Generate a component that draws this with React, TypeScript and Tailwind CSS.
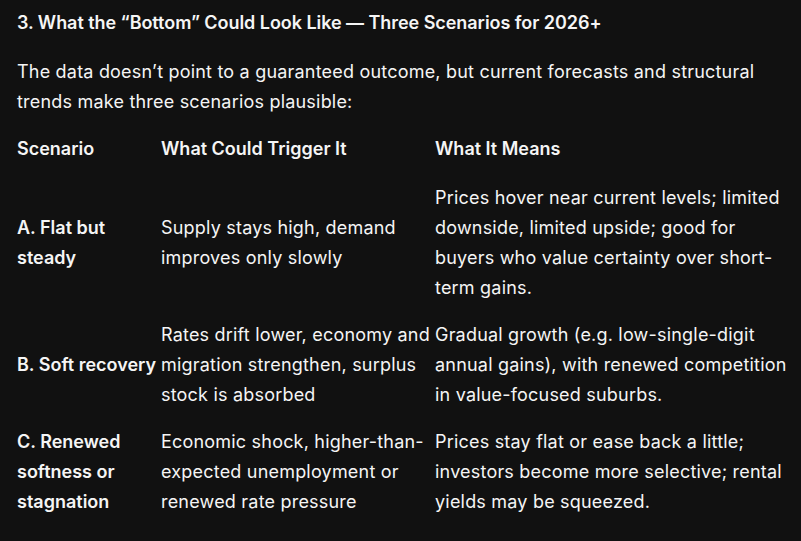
import React from "react";

type Row = { label: string[]; trigger: string[]; means: string[] };

const rows: Row[] = [
  {
    label: ["A. Flat but", "steady"],
    trigger: ["Supply stays high, demand", "improves only slowly"],
    means: [
      "Prices hover near current levels; limited",
      "downside, limited upside; good for",
      "buyers who value certainty over short-",
      "term gains.",
    ],
  },
  {
    label: ["B. Soft recovery"],
    trigger: ["Rates drift lower, economy and", "migration strengthen, surplus", "stock is absorbed"],
    means: [
      "Gradual growth (e.g. low-single-digit",
      "annual gains), with renewed competition",
      "in value-focused suburbs.",
    ],
  },
  {
    label: ["C. Renewed", "softness or", "stagnation"],
    trigger: ["Economic shock, higher-than-", "expected unemployment or", "renewed rate pressure"],
    means: [
      "Prices stay flat or ease back a little;",
      "investors become more selective; rental",
      "yields may be squeezed.",
    ],
  },
];

function Lines({ lines }: { lines: string[] }) {
  return (
    <>
      {lines.map((l, i) => (
        <span key={i} className="block whitespace-nowrap">
          {l}
        </span>
      ))}
    </>
  );
}

export default function App() {
  return (
    <div className="min-h-[541px] w-full bg-[#111111] px-[17px] pt-[9px] text-[#f5f5f5] font-['Inter',sans-serif] text-[18px]">
      <h3 className="font-semibold leading-[27px] tracking-[-0.05px] whitespace-nowrap">
        3. What the “Bottom” Could Look Like — Three Scenarios for 2026+
      </h3>
      <p className="mt-[21px] leading-[30px] tracking-[0.2px]">
        The data doesn’t point to a guaranteed outcome, but current forecasts and structural
        <br />
        trends make three scenarios plausible:
      </p>
      <table className="mt-[9px] w-[778px] table-fixed border-collapse text-left leading-[30px]">
        <colgroup>
          <col className="w-[144px]" />
          <col className="w-[274px]" />
          <col className="w-[360px]" />
        </colgroup>
        <thead>
          <tr className="align-middle">
            <th className="px-0 pt-[8px] pb-[10px] font-semibold">Scenario</th>
            <th className="px-0 pt-[8px] pb-[10px] font-semibold">What Could Trigger It</th>
            <th className="px-0 pt-[8px] pb-[10px] font-semibold">What It Means</th>
          </tr>
        </thead>
        <tbody>
          {rows.map((r, i) => (
            <tr key={i} className="align-middle">
              <td className="px-0 py-[8.5px] font-semibold">
                <Lines lines={r.label} />
              </td>
              <td className="px-0 py-[8.5px] tracking-[0.2px]">
                <Lines lines={r.trigger} />
              </td>
              <td className="px-0 py-[8.5px] tracking-[0.2px]">
                <Lines lines={r.means} />
              </td>
            </tr>
          ))}
        </tbody>
      </table>
    </div>
  );
}
